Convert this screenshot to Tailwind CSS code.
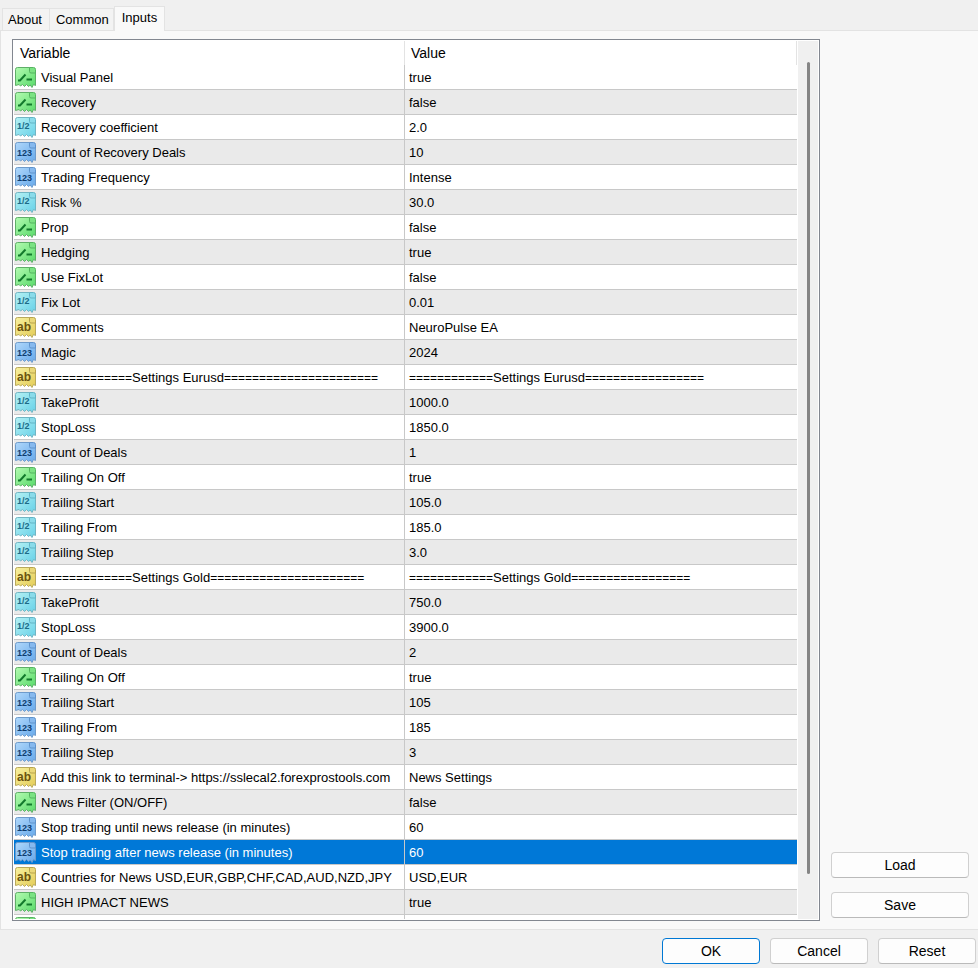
<!DOCTYPE html>
<html lang="en">
<head>
    <meta charset="UTF-8">
    <meta name="viewport" content="width=device-width, initial-scale=1.0">
    <title>NeuroPulse EA</title>
    <script src="https://cdn.jsdelivr.net/npm/@tailwindcss/browser@4"></script>
</head>
<body class="flex h-screen flex-col overflow-hidden bg-[#f0f0f0] font-['Liberation_Sans',Arial,sans-serif] text-[13px] leading-4 text-black">

<!-- Shared icon shapes -->
<svg class="absolute size-0">
    <defs>
        <linearGradient id="gBool" x1="0" y1="0" x2="1" y2="1"><stop offset="0" stop-color="#b4fbb2"/><stop offset="1" stop-color="#57da68"/></linearGradient>
        <linearGradient id="gDouble" x1="0" y1="0" x2="1" y2="1"><stop offset="0" stop-color="#b5f1f4"/><stop offset="1" stop-color="#67d1e8"/></linearGradient>
        <linearGradient id="gInt" x1="0" y1="0" x2="1" y2="1"><stop offset="0" stop-color="#b0d8fb"/><stop offset="1" stop-color="#66a8ea"/></linearGradient>
        <linearGradient id="gString" x1="0" y1="0" x2="1" y2="1"><stop offset="0" stop-color="#f8f1a0"/><stop offset="1" stop-color="#e3cb55"/></linearGradient>
        <path id="sheet" d="M2.5 .5H14.5L20.5 6V18.5L18.5 17.5L17 20.5L15.2 18L13.5 19.5L11.5 17.5L9.5 19.5L7.5 17.5L5.5 19L4 17.5L.5 18.5V2.5Q.5 .5 2.5 .5Z"/>
        <path id="fold" d="M14.5 .5H18.5Q20.5 .5 20.5 2.5V6H16Q14.5 6 14.5 4.5Z"/>
    </defs>
</svg>

<!-- Tabs -->
<nav class="z-10 flex items-end pt-[6px] pl-[2px]">
    <button class="h-[22px] border border-b-0 border-[#e3e3e3] bg-[#f3f3f3] pr-[7px] pl-[5px]">About</button>
    <button class="h-[22px] border border-b-0 border-l-0 border-[#e3e3e3] bg-[#f3f3f3] pr-1 pl-[6px]">Common</button>
    <button class="-mb-px h-[25px] border border-b-0 border-[#e3e3e3] bg-[#f9f9f9] px-[7px] pb-[2px]">Inputs</button>
</nav>

<!-- Inputs page -->
<main class="flex min-h-0 flex-1 border border-r-0 border-[#e3e3e3] bg-[#f9f9f9] py-2 pr-[9px] pl-[11px]">
    <div class="flex min-w-0 flex-1 border border-[#828790] bg-white p-px">
        <div class="min-h-0 min-w-0 flex-1 overflow-hidden">
            <table class="w-full table-fixed border-separate border-spacing-0 text-left whitespace-nowrap">
                <thead>
                    <tr class="h-6 text-sm leading-4">
                        <th class="w-[391px] border-r border-[#e3e3e3] pl-[6px] font-normal">Variable</th>
                        <th class="border-r border-[#e3e3e3] pl-[6px] font-normal">Value</th>
                    </tr>
                </thead>
                <tbody id="inputRows"></tbody>
            </table>
        </div>
        <!-- Scrollbar -->
        <div class="ml-px flex w-5 justify-center bg-[#f0f0f0] pt-[21px] pb-[45px]">
            <div class="w-[3px] rounded-full bg-[#858585]"></div>
        </div>
    </div>
    <div class="ml-[11px] flex w-[138px] flex-col justify-end gap-[14px] pb-[3px]">
        <button class="h-[26px] rounded border border-[#d0d0d0] border-b-[#bababa] bg-[#fdfdfd] text-sm leading-4">Load</button>
        <button class="h-[26px] rounded border border-[#d0d0d0] border-b-[#bababa] bg-[#fdfdfd] text-sm leading-4">Save</button>
    </div>
</main>

<!-- Dialog buttons -->
<footer class="flex justify-end gap-[10px] pt-2 pr-[2px] pb-1 text-sm leading-4">
    <button class="h-[26px] w-[98px] rounded border border-[#0078d4] bg-[#fdfdfd]">OK</button>
    <button class="h-[26px] w-[98px] rounded border border-[#d0d0d0] border-b-[#bababa] bg-[#fdfdfd]">Cancel</button>
    <button class="h-[26px] w-[98px] rounded border border-[#d0d0d0] border-b-[#bababa] bg-[#fdfdfd]">Reset</button>
</footer>

<script>
    const icons = {
        bool: `<use href="#sheet" fill="url(#gBool)" stroke="#5fae68"/>
            <use href="#fold" fill="#7be283" stroke="#55b460"/>
            <path d="M3 13.5H5L10.5 7.5M11.5 12.5H17" fill="none" stroke="#127a2c" stroke-width="2"/>`,
        double: `<use href="#sheet" fill="url(#gDouble)" stroke="#72b5c3"/>
            <use href="#fold" fill="#8adbea" stroke="#62b4c6"/>
            <text x="2" y="12" font-size="9" font-weight="bold" fill="#1c6b88">1/2</text>`,
        int: `<use href="#sheet" fill="url(#gInt)" stroke="#6e9bcb"/>
            <use href="#fold" fill="#86b9ee" stroke="#5f93cc"/>
            <text x="2" y="14" font-size="9" font-weight="bold" fill="#0f3e70">123</text>`,
        string: `<use href="#sheet" fill="url(#gString)" stroke="#b9a95c"/>
            <use href="#fold" fill="#ead878" stroke="#b8a44c"/>
            <text x="2" y="14" font-size="12" font-weight="bold" fill="#6a5310">ab</text>`
    };

    const inputs = [
        ['bool', 'Visual Panel', 'true'],
        ['bool', 'Recovery', 'false'],
        ['double', 'Recovery coefficient', '2.0'],
        ['int', 'Count of Recovery Deals', '10'],
        ['int', 'Trading Frequency', 'Intense'],
        ['double', 'Risk %', '30.0'],
        ['bool', 'Prop', 'false'],
        ['bool', 'Hedging', 'true'],
        ['bool', 'Use FixLot', 'false'],
        ['double', 'Fix Lot', '0.01'],
        ['string', 'Comments', 'NeuroPulse EA'],
        ['int', 'Magic', '2024'],
        ['string', '=============Settings Eurusd======================', '============Settings Eurusd================='],
        ['double', 'TakeProfit', '1000.0'],
        ['double', 'StopLoss', '1850.0'],
        ['int', 'Count of Deals', '1'],
        ['bool', 'Trailing On Off', 'true'],
        ['double', 'Trailing Start', '105.0'],
        ['double', 'Trailing From', '185.0'],
        ['double', 'Trailing Step', '3.0'],
        ['string', '=============Settings Gold======================', '============Settings Gold================='],
        ['double', 'TakeProfit', '750.0'],
        ['double', 'StopLoss', '3900.0'],
        ['int', 'Count of Deals', '2'],
        ['bool', 'Trailing On Off', 'true'],
        ['int', 'Trailing Start', '105'],
        ['int', 'Trailing From', '185'],
        ['int', 'Trailing Step', '3'],
        ['string', 'Add this link to terminal-> https://sslecal2.forexprostools.com', 'News Settings'],
        ['bool', 'News Filter (ON/OFF)', 'false'],
        ['int', 'Stop trading until news release (in minutes)', '60'],
        ['int', 'Stop trading after news release (in minutes)', '60'],
        ['string', 'Countries for News USD,EUR,GBP,CHF,CAD,AUD,NZD,JPY', 'USD,EUR'],
        ['bool', 'HIGH IPMACT NEWS', 'true'],
        ['bool', '', '']
    ];
    const selectedIndex = 31;

    // Separator runs are set one size smaller
    function formatText(text) {
        return text.replace('>', '&gt;').replace(/=+/g, (run) => `<span class="text-xs leading-4">${run}</span>`);
    }

    document.getElementById('inputRows').innerHTML = inputs.map(([type, name, value], index) => {
        let rowColor = index % 2 ? 'bg-[#eaeaea]' : 'bg-white';
        if (index === selectedIndex) rowColor = 'bg-[#0078d7] text-white';
        return `
            <tr class="h-[25px] ${rowColor}">
                <td class="overflow-hidden border-r border-b border-[#c8c8c8] p-0 pl-px">
                    <div class="flex items-center gap-[5px]">
                        <svg viewBox="0 0 21 21" class="size-[21px] shrink-0">${icons[type]}</svg>
                        <span class="pt-[2px]">${formatText(name)}</span>
                    </div>
                </td>
                <td class="border-b border-[#c8c8c8] p-0 pt-[2px] pl-1">${formatText(value)}</td>
            </tr>`;
    }).join('');
</script>
</body>
</html>
